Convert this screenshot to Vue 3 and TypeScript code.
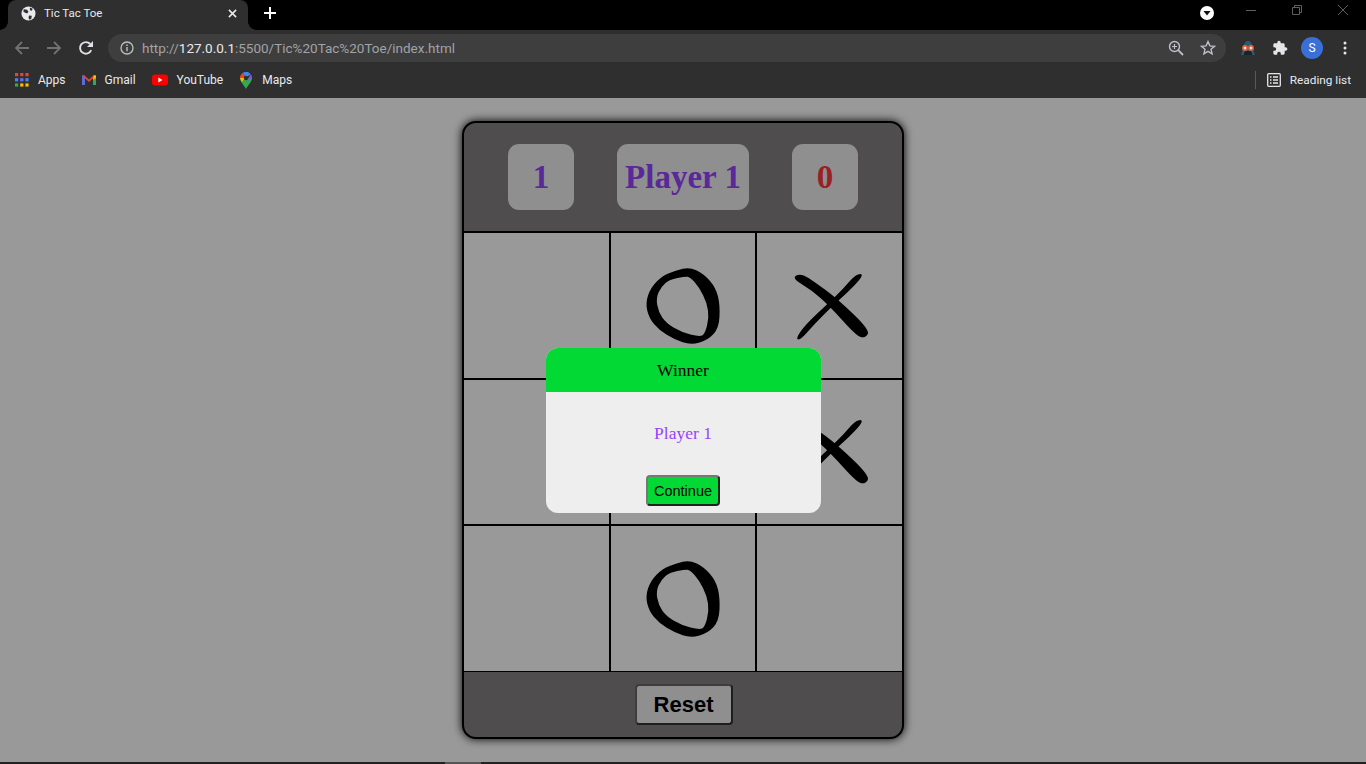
<template>
  <div class="window">
    <header class="chrome">
      <div class="tab-strip">
        <div class="tab">
          <svg class="globe" viewBox="0 0 16 16">
            <circle cx="8" cy="8" r="7.5" fill="#e8eaed" />
            <path d="M3 3.500l3.500.5 1.500 2-1.500 2L5 7.500 2.500 6zM8.500 10l3 .5-.5 3-2 1.200-1-2.200zM9.500 1.500l3 1.500-1 2-2-.5z" fill="#2f2f2f" />
          </svg>
          <span class="tab-title">Tic Tac Toe</span>
          <svg class="tab-close" viewBox="0 0 10 10"><path d="M1 1l8 8M9 1l-8 8" stroke="#e8eaed" stroke-width="1.7" /></svg>
        </div>
        <svg class="new-tab" viewBox="0 0 12 12"><path d="M6 0v12M0 6h12" stroke="#fff" stroke-width="2" /></svg>
        <div class="win-controls">
          <span class="media-btn"><svg viewBox="0 0 14 14"><circle cx="7" cy="7" r="7" fill="#fff" /><path d="M3.500 5h7L7 9.500z" fill="#111" /></svg></span>
          <svg class="win-btn" viewBox="0 0 10 10"><path d="M0 5.500h10" stroke="#5f5f5f" /></svg>
          <svg class="win-btn" viewBox="0 0 10 10"><path d="M.5 2.500h7v7h-7zM2.500 2.500v-2h7v7h-2" stroke="#5f5f5f" fill="none" /></svg>
          <svg class="win-btn" viewBox="0 0 10 10"><path d="M0 0l10 10M10 0L0 10" stroke="#5f5f5f" /></svg>
        </div>
      </div>

      <div class="toolbar">
        <svg class="nav-icon" viewBox="0 0 16 16"><path d="M15 8H2M8 2L2 8l6 6" stroke="#6f7173" stroke-width="1.8" fill="none" /></svg>
        <svg class="nav-icon" viewBox="0 0 16 16"><path d="M1 8h13M8 2l6 6-6 6" stroke="#6f7173" stroke-width="1.8" fill="none" /></svg>
        <svg class="nav-icon" viewBox="0 0 16 16"><path d="M13.200 10.200A5.800 5.800 0 1 1 12.200 4" stroke="#dfe1e4" stroke-width="1.9" fill="none" /><path d="M15 1v6H9z" fill="#dfe1e4" /></svg>
        <div class="omnibox">
          <svg class="info" viewBox="0 0 14 14"><circle cx="7" cy="7" r="6" stroke="#bdc1c6" stroke-width="1.3" fill="none" /><path d="M7 6v4.200M7 3.600v1.300" stroke="#bdc1c6" stroke-width="1.4" /></svg>
          <span class="url">http://<b>127.0.0.1</b>:5500/Tic%20Tac%20Toe/index.html</span>
          <svg class="omni-icon" viewBox="0 0 16 16"><circle cx="6.500" cy="6.500" r="5" stroke="#bdc1c6" stroke-width="1.4" fill="none" /><path d="M10.200 10.200L15 15" stroke="#bdc1c6" stroke-width="1.8" /><path d="M4 6.500h5M6.500 4v5" stroke="#bdc1c6" stroke-width="1.2" /></svg>
          <svg class="omni-icon" viewBox="0 0 16 16"><path d="M8 1.600l1.900 4.300 4.600.4-3.500 3 1.100 4.600L8 11.400l-4.100 2.500L5 9.300l-3.500-3 4.600-.4z" stroke="#bdc1c6" stroke-width="1.4" fill="none" /></svg>
        </div>
        <svg class="ext" viewBox="0 0 16 16">
          <path d="M8 1C5.200 1 4 3.500 3.500 6.500L1 15h14l-2.500-8.500C12 3.500 10.800 1 8 1z" fill="#2a5a70" />
          <path d="M5 11h6l1.500 4h-9z" fill="#16242c" />
          <circle cx="5" cy="8" r="2.900" fill="#e8613c" />
          <circle cx="11" cy="8" r="2.900" fill="#e8613c" />
          <circle cx="5" cy="8" r="1.300" fill="#f4e9e2" />
          <circle cx="11" cy="8" r="1.300" fill="#f4e9e2" />
        </svg>
        <svg class="ext" viewBox="0 0 24 24"><path d="M20.500 11H19V7c0-1.100-.9-2-2-2h-4V3.500C13 2.120 11.880 1 10.500 1S8 2.120 8 3.500V5H4c-1.100 0-1.990.9-1.990 2v3.800H3.500c1.490 0 2.700 1.210 2.700 2.700s-1.210 2.700-2.700 2.700H2V20c0 1.100.9 2 2 2h3.800v-1.500c0-1.490 1.210-2.700 2.700-2.700 1.490 0 2.700 1.210 2.700 2.700V22H17c1.100 0 2-.9 2-2v-4h1.500c1.380 0 2.500-1.120 2.500-2.500S21.880 11 20.500 11z" fill="#e3e5e8" /></svg>
        <span class="avatar">S</span>
        <svg class="menu" viewBox="0 0 4 14"><circle cx="2" cy="2" r="1.500" fill="#e3e5e8" /><circle cx="2" cy="7" r="1.500" fill="#e3e5e8" /><circle cx="2" cy="12" r="1.500" fill="#e3e5e8" /></svg>
      </div>

      <div class="bookmarks">
        <div class="bookmark">
          <svg class="bm-icon" viewBox="0 0 14 14">
            <rect v-for="(sq, i) in appSquares" :key="i" :x="sq.x" :y="sq.y" width="3.2" height="3.2" :fill="sq.fill" />
          </svg>
          <span>Apps</span>
        </div>
        <div class="bookmark">
          <svg class="bm-icon" viewBox="0 0 14 14">
            <path d="M0 2.500h3V12H0z" fill="#5c6bd8" />
            <path d="M11 2.500h3V12h-3z" fill="#34a853" />
            <path d="M0 2.500h2.500L7 6.500l4.500-4L14 2.500 7 9z" fill="#ea4335" />
            <path d="M11.500 2.500L14 2.500V5l-3 2z" fill="#fbbc05" />
          </svg>
          <span>Gmail</span>
        </div>
        <div class="bookmark">
          <svg class="bm-icon yt" viewBox="0 0 16 12"><rect width="16" height="11" y=".5" rx="3" fill="#f00" /><path d="M6.300 3.500L10.500 6l-4.200 2.500z" fill="#fff" /></svg>
          <span>YouTube</span>
        </div>
        <div class="bookmark">
          <svg class="bm-icon pin" viewBox="0 0 14 17">
            <path d="M7 17C5 13 1 10 1 6h12c0 4-4 7-6 11z" fill="#34a853" />
            <path d="M1 6a6 6 0 0 1 3-5.200L7 6z" fill="#ea4335" />
            <path d="M4 .8A6 6 0 0 1 11.500 2L7 6z" fill="#4285f4" />
            <path d="M11.500 2A6 6 0 0 1 13 6l-5 3.500z" fill="#7b5ed6" />
            <path d="M1 6h5L2.800 10z" fill="#fbbc05" />
            <circle cx="7" cy="6" r="2.200" fill="#2f2f2f" />
          </svg>
          <span>Maps</span>
        </div>
        <div class="reading">
          <i class="divider"></i>
          <svg class="bm-icon" viewBox="0 0 14 14"><rect x=".7" y=".7" width="12.600" height="12.600" rx="1" stroke="#e3e5e8" stroke-width="1.300" fill="none" /><path d="M3 4h1.500M6 4h5M3 7h1.500M6 7h5M3 10h1.500M6 10h5" stroke="#e3e5e8" stroke-width="1.300" /></svg>
          <span class="reading-label">Reading list</span>
        </div>
      </div>
    </header>

    <main class="page">
      <div class="game">
        <div class="scoreboard">
          <div class="score p1">{{ scores.p1 }}</div>
          <div class="score turn">{{ current }}</div>
          <div class="score p2">{{ scores.p2 }}</div>
        </div>
        <div class="board">
          <div v-for="(cell, i) in board" :key="i" class="cell">
            <svg v-if="cell === 'O'" class="mark" viewBox="0 0 100 100">
              <path :d="oPath" fill="#000" fill-rule="evenodd" />
            </svg>
            <svg v-else-if="cell === 'X'" class="mark" viewBox="0 0 100 100">
              <path :d="xPath" fill="#000" />
            </svg>
          </div>
        </div>
        <div class="controls">
          <button class="reset">Reset</button>
        </div>
      </div>

      <div class="overlay">
        <div class="modal">
          <div class="modal-head">Winner</div>
          <div class="modal-body">{{ current }}</div>
          <div class="modal-foot">
            <button class="continue">Continue</button>
          </div>
        </div>
      </div>
    </main>

    <div class="bottom-edge"><i></i></div>
  </div>
</template>

<script setup lang="ts">
import { ref } from 'vue';

type Mark = 'X' | 'O' | '';
type Point = [number, number];

const current = ref('Player 1');
const scores = ref({ p1: 1, p2: 0 });
const board = ref<Mark[]>(['', 'O', 'X', '', '', 'X', '', 'O', '']);

const appColors = ['#ea4335', '#ea4335', '#ea4335', '#4285f4', '#6a6ff0', '#4285f4', '#34a853', '#fbbc05', '#fbbc05'];
const appSquares = appColors.map((fill, i) => ({ x: (i % 3) * 5.2, y: Math.floor(i / 3) * 5.2, fill }));

// closed curve through the midpoints, good enough for a hand drawn look
function smooth(points: Point[]): string {
  const mid = (a: Point, b: Point) => `${(a[0] + b[0]) / 2} ${(a[1] + b[1]) / 2}`;
  let d = `M${mid(points[points.length - 1], points[0])}`;
  points.forEach((p, i) => {
    d += `Q${p[0]} ${p[1]} ${mid(p, points[(i + 1) % points.length])}`;
  });
  return d + 'Z';
}

const oPath =
  smooth([[56.5, 12], [71, 19], [83, 33], [87, 50], [86, 73], [75, 85], [58, 90], [41.5, 84.5], [26, 75], [16, 63], [12.5, 48], [17.5, 33], [29, 21], [43, 15.5]]) +
  smooth([[52, 21.5], [36.5, 24.5], [28, 32], [23, 43], [25.5, 57], [33, 68], [48, 77], [67, 82], [72, 78.5], [76, 63], [74, 48], [66, 32], [57, 22]]);

const xPath =
  smooth([[11.5, 23], [21, 18], [36, 28], [56.5, 43], [90, 75], [85.5, 83], [77, 81.5], [50, 51.5], [31.5, 35]]) +
  smooth([[74, 21], [82, 18], [81.5, 23], [67.5, 37.5], [54.5, 49], [34.5, 69], [20.5, 85], [15.5, 84], [25, 70], [48.5, 48], [63.5, 33.5]]);
</script>

<style scoped>
.window {
  width: 1366px;
  height: 764px;
  display: flex;
  flex-direction: column;
  overflow: hidden;
  background: #fff;
  font-family: "Liberation Serif", serif;
}

.chrome {
  background: #2f2f2f;
  font-family: Roboto, "Liberation Sans", sans-serif;
  color: #e8eaed;
}

.tab-strip {
  height: 30px;
  background: #000;
  display: flex;
  align-items: flex-start;
  padding-left: 8px;
}

.tab {
  position: relative;
  width: 240px;
  height: 30px;
  background: #2f2f2f;
  border-radius: 8px 8px 0 0;
  display: flex;
  align-items: center;
  padding: 0 11px 4px 13px;
  box-sizing: border-box;
  font-size: 11.5px;
}

.tab::before,
.tab::after {
  content: "";
  position: absolute;
  bottom: 0;
  width: 8px;
  height: 8px;
}

.tab::before {
  left: -8px;
  background: radial-gradient(circle at 0 0, #000 7.5px, #2f2f2f 8px);
}

.tab::after {
  right: -8px;
  background: radial-gradient(circle at 100% 0, #000 7.5px, #2f2f2f 8px);
}

.globe {
  width: 15px;
  height: 15px;
  margin-right: 8px;
}

.tab-title {
  flex: 1;
}

.tab-close {
  width: 9px;
  height: 9px;
}

.new-tab {
  width: 12px;
  height: 12px;
  margin: 7px 0 0 16px;
}

.win-controls {
  margin-left: auto;
  display: flex;
  align-items: flex-start;
  padding: 5px 18px 0 0;
  gap: 36px;
}

.media-btn {
  display: block;
  width: 14px;
  height: 14px;
  margin: 1px -4px 0 0;
}

.media-btn svg {
  display: block;
}

.win-btn {
  width: 10px;
  height: 10px;
}

.toolbar {
  height: 36px;
  display: flex;
  align-items: center;
  padding: 0 19px 0 14px;
}

.nav-icon {
  width: 16px;
  height: 16px;
  margin-right: 16px;
}

.omnibox {
  flex: 1;
  height: 28px;
  margin: 0 14px 0 -2px;
  padding: 0 10px 0 12px;
  background: #3e3e3e;
  border-radius: 14px;
  display: flex;
  align-items: center;
}

.info {
  width: 14px;
  height: 14px;
  margin-right: 8px;
}

.url {
  flex: 1;
  font-size: 13.5px;
  color: #a0a3a7;
}

.url b {
  font-weight: 400;
  color: #e8eaed;
}

.omni-icon {
  width: 16px;
  height: 16px;
  margin-left: 16px;
}

.ext {
  width: 16px;
  height: 16px;
  margin-right: 16px;
}

.avatar {
  width: 22px;
  height: 22px;
  margin: 0 20px 0 -3px;
  border-radius: 50%;
  background: #3b6fd8;
  color: #fff;
  font-size: 12px;
  display: flex;
  align-items: center;
  justify-content: center;
}

.menu {
  width: 4px;
  height: 14px;
}

.bookmarks {
  height: 32px;
  display: flex;
  align-items: center;
  padding: 0 15px 4px 15px;
  box-sizing: border-box;
  font-size: 12px;
}

.bookmark {
  display: flex;
  align-items: center;
  margin-right: 16px;
}

.bm-icon {
  width: 14px;
  height: 14px;
  margin-right: 9px;
}

.yt {
  width: 16px;
}

.pin {
  height: 17px;
}

.reading {
  margin-left: auto;
  display: flex;
  align-items: center;
}

.reading-label {
  font-size: 11.8px;
}

.divider {
  width: 1px;
  height: 18px;
  background: #5a5a5a;
  margin-right: 11px;
}

.page {
  position: relative;
  flex: 1;
  min-height: 0;
  display: flex;
  justify-content: center;
  align-items: flex-start;
  padding-top: 23px;
  box-sizing: border-box;
}

.game {
  width: 442px;
  box-sizing: border-box;
  border: 2px solid #000;
  border-radius: 14px;
  overflow: hidden;
  box-shadow: 0 0 10px #000;
  background: #848182;
}

.scoreboard {
  height: 108px;
  display: flex;
  align-items: center;
  justify-content: center;
  gap: 43px;
}

.score {
  width: 66px;
  height: 66px;
  box-sizing: border-box;
  border-radius: 11px;
  background: #eee;
  display: flex;
  align-items: center;
  justify-content: center;
  font-size: 33px;
  font-weight: 700;
  color: #9643fd;
}

.score.turn {
  width: 132px;
  white-space: nowrap;
}

.score.p2 {
  color: #ff383f;
}

.board {
  display: grid;
  grid-template-columns: 147px 146px 1fr;
  grid-template-rows: 147px 146px 146px;
  background: #fff;
  border-top: 2px solid #000;
}

.cell {
  display: flex;
  align-items: center;
  justify-content: center;
  border-right: 2px solid #000;
  border-bottom: 2px solid #000;
}

.cell:nth-child(3n) {
  border-right: none;
}

.cell:nth-child(n + 7) {
  border-bottom: 1px solid #000;
}

.mark {
  width: 100px;
  height: 100px;
  margin-top: -2px;
}

.controls {
  height: 65px;
  display: flex;
  align-items: center;
  justify-content: center;
}

.reset {
  width: 98px;
  height: 41px;
  margin-left: 1px;
  background: #eee;
  color: #000;
  border: 2px solid;
  border-color: #666 #333 #333 #666;
  border-radius: 4px;
  font-family: "Liberation Sans", sans-serif;
  font-size: 22px;
  font-weight: 700;
}

.overlay {
  position: absolute;
  inset: 0;
  padding-top: 1px;
  background: rgba(0, 0, 0, 0.4);
  display: flex;
  align-items: center;
  justify-content: center;
}

.modal {
  width: 275px;
  height: 165px;
  border-radius: 12px;
  overflow: hidden;
  background: #eee;
  display: flex;
  flex-direction: column;
}

.modal-head {
  height: 44px;
  background: #03d935;
  display: flex;
  align-items: center;
  justify-content: center;
  font-size: 17.5px;
  color: #000;
}

.modal-body {
  flex: 1;
  display: flex;
  align-items: center;
  justify-content: center;
  font-size: 17.5px;
  color: #9643fd;
}

.modal-foot {
  display: flex;
  justify-content: center;
  padding-bottom: 7px;
}

.continue {
  width: 74px;
  height: 31px;
  padding: 0;
  background: #03d935;
  color: #000;
  border: 2px solid;
  border-color: #777 #222 #222 #777;
  border-radius: 4px;
  font-family: "Liberation Sans", sans-serif;
  font-size: 14.5px;
}

.bottom-edge {
  height: 2px;
  background: #222;
  display: flex;
  padding-left: 445px;
  position: relative;
}

.bottom-edge i {
  width: 36px;
  background: #555;
}
</style>

<style>
html,
body {
  margin: 0;
  overflow: hidden;
}
</style>
